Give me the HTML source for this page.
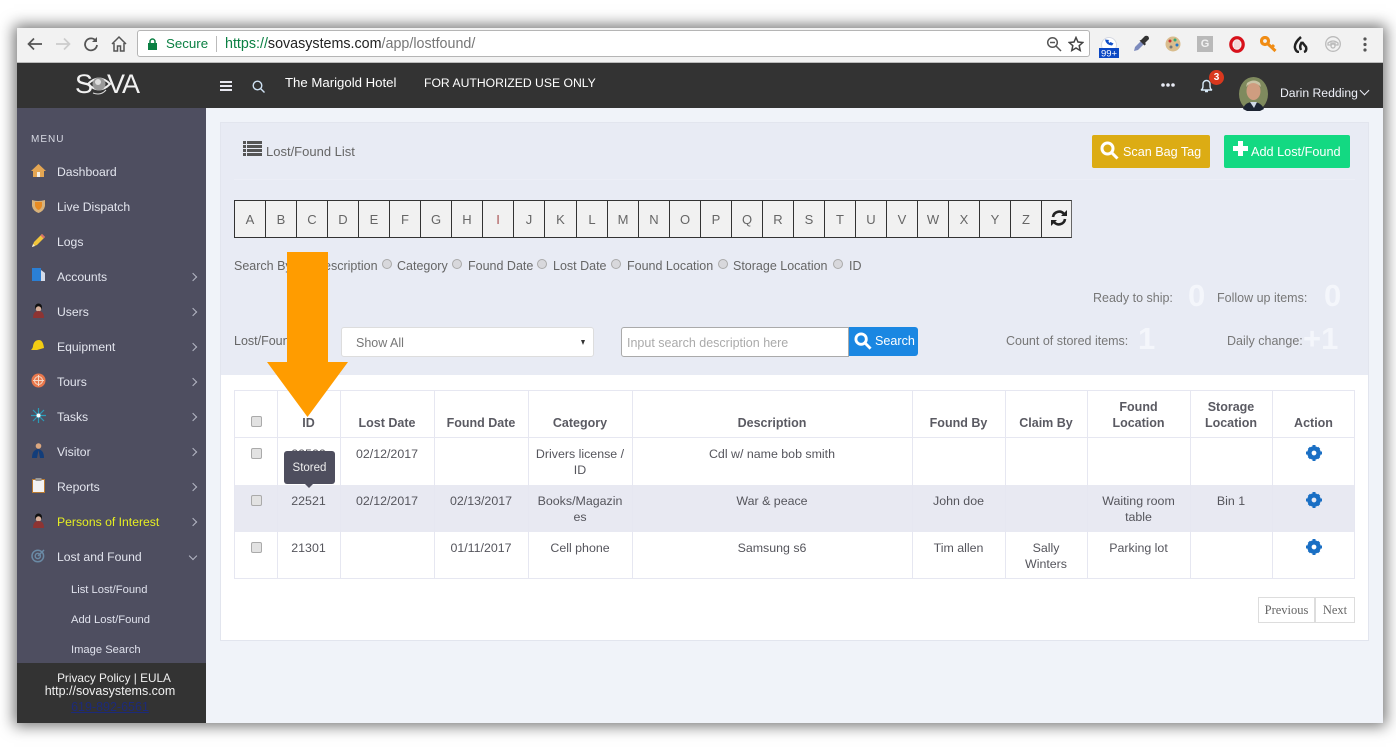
<!DOCTYPE html>
<html><head><meta charset="utf-8"><title>Lost/Found</title>
<style>
html,body{margin:0;padding:0;width:1396px;height:750px;overflow:hidden;background:#fff}
body{font-family:"Liberation Sans",sans-serif;position:relative;font-size:12.5px;color:#555}
.a,.t,.c,svg.i{position:absolute}
.t{white-space:nowrap;line-height:16px}
.c{white-space:nowrap;line-height:16px;text-align:center}
.win{position:absolute;left:17px;top:28px;width:1366px;height:695px;box-shadow:0 0 14px 3px rgba(0,0,0,.55)}
.m{color:#e3e5ee;font-size:12.2px}
.th{font-weight:bold;color:#5a5a62;font-size:12.5px}
.td{color:#55555c;font-size:12.4px}
.l{position:absolute;top:200px;height:36px;width:30px;border:1px solid #333;border-left:0;background:#f1f1f1;text-align:center;line-height:37px;font-size:13px;color:#666}
.v{position:absolute;top:390px;height:189px;width:1px;background:#e6e7f1}
.h{position:absolute;left:234px;width:1121px;height:1px;background:#e6e7f1}
.cb{position:absolute;width:9px;height:9px;border:1px solid #aaa;background:#e2e2e2;border-radius:2px}
.r{position:absolute;width:8px;height:8px;border:1px solid #aaa;background:#d8d8dc;border-radius:50%}
.big{position:absolute;color:#f4f6fb;font-weight:bold;font-size:31px;line-height:32px}
.chev{position:absolute;left:190px;width:5px;height:5px;border-top:1.5px solid #b5b7c4;border-right:1.5px solid #b5b7c4;transform:rotate(45deg)}
</style></head><body>
<div class="win"></div>
<div class="a" style="left:17px;top:28px;width:1366px;height:35px;background:#f2f2f2;border-bottom:1px solid #bbb;box-sizing:border-box"></div>
<div class="a" style="left:137px;top:30px;width:953px;height:27px;background:#fff;border:1px solid #b5b5b5;border-radius:3px;box-sizing:border-box"></div>

<svg class="i" style="left:26px;top:36px" width="18" height="16" viewBox="0 0 18 16" fill="none" stroke="#555" stroke-width="1.700"><path d="M16 8H3M8 2.500L2.500 8l5.500 5.500"/></svg>
<svg class="i" style="left:54px;top:36px" width="18" height="16" viewBox="0 0 18 16" fill="none" stroke="#ccc" stroke-width="1.700"><path d="M2 8h13M10 2.500L15.500 8 10 13.500"/></svg>
<svg class="i" style="left:82px;top:36px" width="18" height="16" viewBox="0 0 18 16" fill="none" stroke="#555" stroke-width="1.800"><path d="M14 5a6 6 0 1 0 1 4"/><path d="M15 1v5h-5" fill="#555" stroke="none"/></svg>
<svg class="i" style="left:110px;top:35px" width="18" height="18" viewBox="0 0 18 18" fill="none" stroke="#555" stroke-width="1.500"><path d="M2 9l7-7 7 7M4 8v8h3.500v-5h3v5H14V8"/></svg>
<svg class="i" style="left:147px;top:38px" width="11" height="12" viewBox="0 0 11 12"><path d="M1 5h9v7H1z" fill="#0b8043"/><path d="M3 5V3.500a2.500 2.500 0 0 1 5 0V5" fill="none" stroke="#0b8043" stroke-width="1.500"/></svg>
<div class="t" style="left:166px;top:36px;color:#0b8043;font-size:13.3px">Secure</div>
<div class="a" style="left:216px;top:36px;width:1px;height:16px;background:#bbb"></div>
<div class="t" style="left:225px;top:36px;font-size:14.3px;color:#777"><span style="color:#0b8043">https://</span><span style="color:#222">sovasystems.com</span>/app/lostfound/</div>
<svg class="i" style="left:1046px;top:36px" width="16" height="16" viewBox="0 0 16 16" fill="none" stroke="#555" stroke-width="1.500"><circle cx="6.500" cy="6.500" r="4.800"/><path d="M10 10l5 5M4 6.500h5"/></svg>
<svg class="i" style="left:1068px;top:36px" width="16" height="16" viewBox="0 0 16 16" fill="none" stroke="#444" stroke-width="1.500"><path d="M8 1.500l2 4.500 4.800.5-3.600 3.200 1 4.800L8 12l-4.200 2.500 1-4.800L1.200 6.500 6 6z"/></svg>

<svg class="i" style="left:1099px;top:36px" width="20" height="22" viewBox="0 0 20 22"><circle cx="10" cy="9" r="7.500" fill="#fff" stroke="#d5d8e2"/><path d="M6 3.500q1 5.500 7 6l1.500-2-3-1.500-1 1-1.200-2 1-1z" fill="#1250c8"/><rect y="12" width="20" height="10" fill="#0c48c4"/><text x="10" y="20.500" font-size="9.500" fill="#fff" text-anchor="middle" font-family="Liberation Sans">99+</text></svg>
<svg class="i" style="left:1133px;top:35px" width="17" height="17" viewBox="0 0 17 17"><path d="M1 16l1-4 7-7 3 3-7 7z" fill="#7d8bbd"/><path d="M8 5l4-4q4-1 4 3l-4 4 1 1-1.500 1.500-5-5z" fill="#333"/></svg>
<svg class="i" style="left:1165px;top:36px" width="16" height="16" viewBox="0 0 16 16"><circle cx="8" cy="8" r="7.500" fill="#d9bd8e"/><circle cx="5" cy="5" r="1.500" fill="#c33"/><circle cx="10" cy="4" r="1.500" fill="#3a7"/><circle cx="12" cy="9" r="1.500" fill="#27c"/><circle cx="6" cy="11" r="1.500" fill="#777"/></svg>
<div class="c" style="left:1197px;top:36px;width:16px;height:16px;background:#b9b9b9;color:#f2f2f2;font-size:11px;font-weight:bold">G</div>
<svg class="i" style="left:1229px;top:36px" width="16" height="17" viewBox="0 0 16 17"><ellipse cx="8" cy="8.500" rx="6.200" ry="6.800" fill="none" stroke="#d8111b" stroke-width="3.200"/><path d="M5 6l2-2 4 1v7l-6 1z" fill="#f4d8d8"/></svg>
<svg class="i" style="left:1260px;top:36px" width="17" height="17" viewBox="0 0 17 17"><circle cx="5" cy="5" r="3.500" fill="none" stroke="#f08c14" stroke-width="3.200"/><path d="M7.500 7.500l8 7.500M12 11l2-2" stroke="#f08c14" stroke-width="3" fill="none"/></svg>
<svg class="i" style="left:1293px;top:36px" width="15" height="17" viewBox="0 0 15 17" fill="none" stroke="#222" stroke-width="2.500"><path d="M8 1Q1 7 2 12q1 4 4 4M9 6q-3 4-1 8M9 6l4 5q1 4-2 5"/></svg>
<svg class="i" style="left:1325px;top:36px" width="16" height="16" viewBox="0 0 16 16" fill="none" stroke="#bbb" stroke-width="1.300"><circle cx="8" cy="8" r="7.300"/><path d="M3 7q5-4 10 0v2h-3V7H6v2H3z"/><circle cx="8" cy="10" r="2"/></svg>
<svg class="i" style="left:1363px;top:37px" width="4" height="15" viewBox="0 0 4 15" fill="#555"><circle cx="2" cy="2" r="1.600"/><circle cx="2" cy="7.500" r="1.600"/><circle cx="2" cy="13" r="1.600"/></svg>

<div class="a" style="left:17px;top:63px;width:1366px;height:45px;background:#333"></div>
<div class="t" style="left:75px;top:69px;font-size:27px;line-height:30px;color:#f2f2f2">S</div>
<div class="t" style="left:107px;top:69px;font-size:27px;line-height:30px;color:#f2f2f2;letter-spacing:-1px">VA</div>
<svg class="i" style="left:87px;top:72px" width="24" height="26" viewBox="0 0 24 26"><path d="M1 12Q12 1 23 12 12 23 1 12z" fill="none" stroke="#eee" stroke-width="2"/><circle cx="12" cy="12" r="6.500" fill="#999"/><circle cx="11" cy="10" r="3" fill="#ddd"/><path d="M6 21q8 3 13-3" fill="none" stroke="#ddd"/></svg>
<svg class="i" style="left:220px;top:81px" width="12" height="10" viewBox="0 0 12 10" fill="#e8e8f0"><rect width="12" height="2"/><rect y="4" width="12" height="2"/><rect y="8" width="12" height="2"/></svg>
<svg class="i" style="left:252px;top:80px" width="14" height="13" viewBox="0 0 14 13" fill="none" stroke="#cfe2f4" stroke-width="1.400"><circle cx="5.500" cy="5.500" r="4.300"/><path d="M8.500 8.500l4 4"/></svg>
<div class="t" style="left:285px;top:75px;color:#fff;font-size:13.2px">The Marigold Hotel</div>
<div class="t" style="left:424px;top:75px;color:#fff;font-size:12.2px">FOR AUTHORIZED USE ONLY</div>
<svg class="i" style="left:1161px;top:83px" width="14" height="4" viewBox="0 0 14 4" fill="#e8eaf4"><circle cx="2" cy="2" r="1.800"/><circle cx="7" cy="2" r="1.800"/><circle cx="12" cy="2" r="1.800"/></svg>
<svg class="i" style="left:1200px;top:79px" width="13" height="14" viewBox="0 0 13 14" fill="none" stroke="#d8eaf8" stroke-width="1.400"><path d="M1 11h11q-2-1-2-4V5a3.500 3.500 0 0 0-7 0v2q0 3-2 4zM5 12.500h3"/></svg>
<div class="c" style="left:1209px;top:70px;width:15px;height:15px;line-height:15px;border-radius:50%;background:#d9381e;color:#fff;font-size:10px;font-weight:bold">3</div>
<div class="t" style="left:1280px;top:85px;color:#eef0f8;font-size:12.2px">Darin Redding</div>
<div class="a" style="left:1361px;top:87px;width:6px;height:6px;border-right:1px solid #eef0f8;border-bottom:1px solid #eef0f8;transform:rotate(45deg)"></div>

<div class="a" style="left:17px;top:108px;width:189px;height:555px;background:#4e4e60"></div>
<div class="a" style="left:17px;top:663px;width:189px;height:60px;background:#333"></div>
<div class="a" style="left:206px;top:108px;width:1177px;height:615px;background:#f0f3f9"></div>
<svg class="i" style="left:1239px;top:77px" width="29" height="34" viewBox="0 0 29 34"><ellipse cx="14.500" cy="17" rx="14.500" ry="17" fill="#7f8a5e"/><ellipse cx="14.500" cy="14" rx="7" ry="9" fill="#cf9d80"/><path d="M7 10q7-8 15 0l-1-4q-6-5-13 0z" fill="#c9c3a5"/><path d="M4 32q2-7 10-7t11 7l-4 2H8z" fill="#1d2433"/><path d="M11 25h7l-3 6z" fill="#cfd8e6"/></svg>

<div class="t" style="left:31px;top:132px;font-size:10px;color:#d8dae4;letter-spacing:1px">MENU</div>
<div class="t m" style="left:57px;top:164px">Dashboard</div>
<div class="t m" style="left:57px;top:199px">Live Dispatch</div>
<div class="t m" style="left:57px;top:234px">Logs</div>
<div class="t m" style="left:57px;top:269px">Accounts</div>
<div class="t m" style="left:57px;top:304px">Users</div>
<div class="t m" style="left:57px;top:339px">Equipment</div>
<div class="t m" style="left:57px;top:374px">Tours</div>
<div class="t m" style="left:57px;top:409px">Tasks</div>
<div class="t m" style="left:57px;top:444px">Visitor</div>
<div class="t m" style="left:57px;top:479px">Reports</div>
<div class="t m" style="left:57px;top:514px;color:#e6ee22">Persons of Interest</div>
<div class="t m" style="left:57px;top:549px">Lost and Found</div>
<div class="t" style="left:71px;top:582px;color:#dfe1ec;font-size:11.2px">List Lost/Found</div>
<div class="t" style="left:71px;top:612px;color:#dfe1ec;font-size:11.2px">Add Lost/Found</div>
<div class="t" style="left:71px;top:642px;color:#dfe1ec;font-size:11.2px">Image Search</div>
<div class="chev" style="top:274px"></div><div class="chev" style="top:309px"></div><div class="chev" style="top:344px"></div><div class="chev" style="top:379px"></div><div class="chev" style="top:414px"></div><div class="chev" style="top:449px"></div><div class="chev" style="top:484px"></div><div class="chev" style="top:519px"></div>
<div class="chev" style="top:553px;transform:rotate(135deg)"></div>

<svg class="i" style="left:31px;top:163px" width="15" height="15" viewBox="0 0 15 15"><path d="M0 8l7.500-7L15 8h-2v6H2V8z" fill="#e4a653"/><path d="M6 14V9h3v5z" fill="#f4eee2"/></svg>
<svg class="i" style="left:31px;top:198px" width="15" height="15" viewBox="0 0 15 15"><path d="M1 2q6 2 13 0v6q-1 5-6.500 7Q2 13 1 8z" fill="#d8b27a"/><path d="M4 4h7v4q-1 3-3.500 4Q5 11 4 8z" fill="#e88b22"/></svg>
<svg class="i" style="left:31px;top:233px" width="15" height="15" viewBox="0 0 15 15"><path d="M1 14l2-5 8-8 3 3-8 8z" fill="#f2c63c"/><path d="M1 14l1-3 2 2z" fill="#f6efe0"/><path d="M11 1l3 3-1.500 1.500-3-3z" fill="#d9706a"/></svg>
<svg class="i" style="left:32px;top:268px" width="13" height="14" viewBox="0 0 13 14"><rect width="9" height="13" fill="#2a7fd5"/><path d="M9 2l4 3v8H9z" fill="#d5dbe8"/></svg>
<svg class="i" style="left:32px;top:303px" width="13" height="16" viewBox="0 0 13 16"><circle cx="6.500" cy="4" r="3.500" fill="#111"/><circle cx="6.500" cy="6" r="2.700" fill="#d8b09a"/><path d="M1 15q0-7 5.500-7T12 15z" fill="#8d3433"/></svg>
<svg class="i" style="left:31px;top:339px" width="14" height="12" viewBox="0 0 14 12"><path d="M0 11q2-2 2-4 1-6 6-6 4 0 5 8l-7 2z" fill="#f3cd12"/></svg>
<svg class="i" style="left:31px;top:373px" width="15" height="15" viewBox="0 0 15 15"><circle cx="7.500" cy="7.500" r="7" fill="#e8774c"/><circle cx="7.500" cy="7.500" r="4" fill="none" stroke="#f4d8c5"/><path d="M7.500 2v11M2 7.500h11" stroke="#f4d8c5"/></svg>
<svg class="i" style="left:31px;top:408px" width="15" height="15" viewBox="0 0 15 15" stroke="#2a9cb8" stroke-width="1.200"><path d="M7.500 0v15M0 7.500h15M2 2l11 11M13 2L2 13"/><circle cx="7.500" cy="7.500" r="2" fill="#fff" stroke="none"/></svg>
<svg class="i" style="left:31px;top:443px" width="14" height="16" viewBox="0 0 14 16"><circle cx="7.500" cy="3" r="2.800" fill="#dca77f"/><path d="M1 15q0-8 6-9 6 1 6 9H9L7.500 7 6 15z" fill="#123d7a"/></svg>
<svg class="i" style="left:32px;top:478px" width="13" height="15" viewBox="0 0 13 15"><rect x=".5" y="1.500" width="12" height="13" fill="#f3f3f3" stroke="#b87a32"/><rect x="3.500" y="0" width="6" height="3" fill="#999"/></svg>
<svg class="i" style="left:32px;top:513px" width="13" height="16" viewBox="0 0 13 16"><circle cx="6.500" cy="4" r="3.500" fill="#111"/><circle cx="6.500" cy="6" r="2.700" fill="#d8b09a"/><path d="M1 15q0-7 5.500-7T12 15z" fill="#8d3433"/></svg>
<svg class="i" style="left:31px;top:548px" width="15" height="15" viewBox="0 0 15 15" fill="none" stroke="#6a8aa5" stroke-width="1.500"><circle cx="6.800" cy="8" r="5.800"/><circle cx="6.800" cy="8" r="2.600"/><path d="M7 8l6-6"/></svg>

<div class="c" style="left:17px;top:670px;width:189px;color:#f0f0f0;font-size:11.8px;padding-left:5px;box-sizing:border-box">Privacy Policy | EULA</div>
<div class="c" style="left:17px;top:683px;width:186px;color:#f0f0f0;font-size:12.5px">http://sovasystems.com</div>
<div class="c" style="left:17px;top:699px;width:186px;color:#1c2a7a;font-size:12.5px;text-decoration:underline">619-892-6561</div>

<div class="a" style="left:220px;top:122px;width:1149px;height:519px;background:#fff;border:1px solid #e2e5ee;box-sizing:border-box"></div>
<div class="a" style="left:221px;top:123px;width:1147px;height:252px;background:#e8ebf4"></div>
<div class="a" style="left:234px;top:179px;width:1121px;height:1px;background:#eceef6"></div>

<svg class="i" style="left:243px;top:141px" width="19" height="15" viewBox="0 0 19 15" fill="#555"><rect width="3" height="3"/><rect x="4" width="15" height="3"/><rect y="4" width="3" height="3"/><rect x="4" y="4" width="15" height="3"/><rect y="8" width="3" height="3"/><rect x="4" y="8" width="15" height="3"/><rect y="12" width="3" height="3"/><rect x="4" y="12" width="15" height="3"/></svg>
<div class="t" style="left:266px;top:144px;color:#666;font-size:13px">Lost/Found List</div>

<div class="a" style="left:1092px;top:135px;width:118px;height:33px;background:#dcac14;border-radius:2px"></div>
<svg class="i" style="left:1100px;top:141px" width="19" height="19" viewBox="0 0 19 19" fill="none" stroke="#fff" stroke-width="3"><circle cx="7.500" cy="7.500" r="5.500"/><path d="M11.500 11.500l6 6"/></svg>
<div class="t" style="left:1123px;top:144px;color:#fff;font-size:12.6px">Scan Bag Tag</div>
<div class="a" style="left:1224px;top:135px;width:126px;height:33px;background:#13d982;border-radius:2px"></div>
<svg class="i" style="left:1233px;top:141px" width="15" height="15" viewBox="0 0 15 15" fill="#fff"><path d="M5 0h5v5h5v5h-5v5H5v-5H0V5h5z"/></svg>
<div class="t" style="left:1251px;top:144px;color:#fff;font-size:12.7px">Add Lost/Found</div>

<div class="a" style="left:234px;top:200px;width:1px;height:38px;background:#333"></div>
<div class="l" style="left:235px">A</div><div class="l" style="left:266px">B</div><div class="l" style="left:297px">C</div><div class="l" style="left:328px">D</div><div class="l" style="left:359px">E</div><div class="l" style="left:390px">F</div><div class="l" style="left:421px">G</div><div class="l" style="left:452px">H</div><div class="l" style="left:483px;color:#a55">I</div><div class="l" style="left:514px">J</div><div class="l" style="left:545px;width:31px">K</div><div class="l" style="left:577px">L</div><div class="l" style="left:608px">M</div><div class="l" style="left:639px">N</div><div class="l" style="left:670px">O</div><div class="l" style="left:701px">P</div><div class="l" style="left:732px">Q</div><div class="l" style="left:763px">R</div><div class="l" style="left:794px">S</div><div class="l" style="left:825px">T</div><div class="l" style="left:856px">U</div><div class="l" style="left:887px">V</div><div class="l" style="left:918px">W</div><div class="l" style="left:949px">X</div><div class="l" style="left:980px">Y</div><div class="l" style="left:1011px">Z</div><div class="l" style="left:1042px;width:29px;border-right:1px solid #666"></div>
<svg class="i" style="left:1050px;top:209px" width="18" height="18" viewBox="0 0 18 18" fill="none" stroke="#222" stroke-width="2.600"><path d="M3 8a6.200 6.200 0 0 1 11-3"/><path d="M15 10a6.200 6.200 0 0 1-11 3"/><path d="M17 1v6h-6z" fill="#222" stroke="none"/><path d="M1 17v-6h6z" fill="#222" stroke="none"/></svg>

<div class="t" style="left:234px;top:258px;color:#666;font-weight:normal;font-size:12.5px">Search By</div>
<div class="t" style="left:315px;top:258px;color:#666">Description</div>
<div class="r" style="left:382px;top:259px"></div><div class="t" style="left:397px;top:258px;color:#666">Category</div>
<div class="r" style="left:452px;top:259px"></div><div class="t" style="left:468px;top:258px;color:#666">Found Date</div>
<div class="r" style="left:537px;top:259px"></div><div class="t" style="left:553px;top:258px;color:#666">Lost Date</div>
<div class="r" style="left:611px;top:259px"></div><div class="t" style="left:627px;top:258px;color:#666">Found Location</div>
<div class="r" style="left:718px;top:259px"></div><div class="t" style="left:733px;top:258px;color:#666">Storage Location</div>
<div class="r" style="left:833px;top:259px"></div><div class="t" style="left:849px;top:258px;color:#666">ID</div>

<div class="t" style="left:1093px;top:290px;color:#777">Ready to ship:</div>
<div class="big" style="left:1188px;top:280px">0</div>
<div class="t" style="left:1217px;top:290px;color:#777">Follow up items:</div>
<div class="big" style="left:1324px;top:280px">0</div>
<div class="t" style="left:1006px;top:333px;color:#777">Count of stored items:</div>
<div class="big" style="left:1138px;top:323px">1</div>
<div class="t" style="left:1227px;top:333px;color:#777">Daily change:</div>
<div class="big" style="left:1305px;top:323px;margin-left:-2px">+1</div>

<div class="t" style="left:234px;top:333px;color:#666">Lost/Found</div>
<div class="a" style="left:341px;top:327px;width:253px;height:30px;background:#fff;border:1px solid #ddd;border-radius:3px;box-sizing:border-box"></div>
<div class="t" style="left:356px;top:335px;color:#777">Show All</div>
<div class="a" style="left:581px;top:340px;width:0;height:0;border-left:2.500px solid transparent;border-right:2.500px solid transparent;border-top:5px solid #333"></div>
<div class="a" style="left:621px;top:327px;width:228px;height:30px;background:#fff;border:1px solid #aaa;border-radius:3px 0 0 3px;box-sizing:border-box"></div>
<div class="t" style="left:627px;top:335px;color:#aaa">Input search description here</div>
<div class="a" style="left:849px;top:327px;width:69px;height:29px;background:#1a87e2;border-radius:0 3px 3px 0"></div>
<svg class="i" style="left:854px;top:332px" width="18" height="18" viewBox="0 0 19 19" fill="none" stroke="#fff" stroke-width="3"><circle cx="7.500" cy="7.500" r="5.500"/><path d="M11.500 11.500l6 6"/></svg>
<div class="t" style="left:875px;top:333px;color:#fff;font-size:12.6px">Search</div>

<div class="a" style="left:234px;top:390px;width:1121px;height:189px;background:#fff;border-radius:3px"></div>
<div class="a" style="left:235px;top:485px;width:1119px;height:47px;background:#e8e9f2"></div>
<div class="h" style="top:390px"></div><div class="h" style="top:437px"></div><div class="h" style="top:578px"></div>
<div class="v" style="left:234px"></div><div class="v" style="left:277px"></div><div class="v" style="left:340px"></div><div class="v" style="left:434px"></div><div class="v" style="left:528px"></div><div class="v" style="left:632px"></div><div class="v" style="left:912px"></div><div class="v" style="left:1005px"></div><div class="v" style="left:1087px"></div><div class="v" style="left:1190px"></div><div class="v" style="left:1272px"></div><div class="v" style="left:1354px"></div>

<div class="cb" style="left:251px;top:416px"></div><div class="cb" style="left:251px;top:448px"></div><div class="cb" style="left:251px;top:495px"></div><div class="cb" style="left:251px;top:542px"></div>

<div class="c th" style="left:277px;width:63px;top:415px">ID</div>
<div class="c th" style="left:340px;width:94px;top:415px">Lost Date</div>
<div class="c th" style="left:434px;width:94px;top:415px">Found Date</div>
<div class="c th" style="left:528px;width:104px;top:415px">Category</div>
<div class="c th" style="left:632px;width:280px;top:415px">Description</div>
<div class="c th" style="left:912px;width:93px;top:415px">Found By</div>
<div class="c th" style="left:1005px;width:82px;top:415px">Claim By</div>
<div class="c th" style="left:1087px;width:103px;top:399px">Found<br>Location</div>
<div class="c th" style="left:1190px;width:82px;top:399px">Storage<br>Location</div>
<div class="c th" style="left:1272px;width:83px;top:415px">Action</div>

<div class="c td" style="left:277px;width:63px;top:446px">22522</div>
<div class="c td" style="left:340px;width:94px;top:446px">02/12/2017</div>
<div class="c td" style="left:528px;width:104px;top:446px">Drivers license /<br>ID</div>
<div class="c td" style="left:632px;width:280px;top:446px">Cdl w/ name bob smith</div>

<div class="c td" style="left:277px;width:63px;top:493px">22521</div>
<div class="c td" style="left:340px;width:94px;top:493px">02/12/2017</div>
<div class="c td" style="left:434px;width:94px;top:493px">02/13/2017</div>
<div class="c td" style="left:528px;width:104px;top:493px">Books/Magazin<br>es</div>
<div class="c td" style="left:632px;width:280px;top:493px">War &amp; peace</div>
<div class="c td" style="left:912px;width:93px;top:493px">John doe</div>
<div class="c td" style="left:1087px;width:103px;top:493px">Waiting room<br>table</div>
<div class="c td" style="left:1190px;width:82px;top:493px">Bin 1</div>

<div class="c td" style="left:277px;width:63px;top:540px">21301</div>
<div class="c td" style="left:434px;width:94px;top:540px">01/11/2017</div>
<div class="c td" style="left:528px;width:104px;top:540px">Cell phone</div>
<div class="c td" style="left:632px;width:280px;top:540px">Samsung s6</div>
<div class="c td" style="left:912px;width:93px;top:540px">Tim allen</div>
<div class="c td" style="left:1005px;width:82px;top:540px">Sally<br>Winters</div>
<div class="c td" style="left:1087px;width:103px;top:540px">Parking lot</div>

<svg class="i" style="left:1306px;top:445px" width="16" height="16" viewBox="0 0 16 16"><circle cx="8" cy="8" r="4.600" fill="none" stroke="#1a6fc4" stroke-width="4.400"/><path d="M6.500 0h3v3h-3zM6.500 13h3v3h-3zM0 6.500h3v3H0zM13 6.500h3v3h-3zM1.800 3.900l2.100-2.100 2 2-2.100 2.100zM10.100 12.200l2.100-2.100 2 2-2.100 2.100zM1.800 12.100l2-2 2.100 2.100-2 2zM10.100 3.800l2.100-2 2 2-2.100 2.100z" fill="#1a6fc4"/></svg>
<svg class="i" style="left:1306px;top:492px" width="16" height="16" viewBox="0 0 16 16"><circle cx="8" cy="8" r="4.600" fill="none" stroke="#1a6fc4" stroke-width="4.400"/><path d="M6.500 0h3v3h-3zM6.500 13h3v3h-3zM0 6.500h3v3H0zM13 6.500h3v3h-3zM1.800 3.900l2.100-2.100 2 2-2.100 2.100zM10.100 12.200l2.100-2.100 2 2-2.100 2.100zM1.800 12.100l2-2 2.100 2.100-2 2zM10.100 3.800l2.100-2 2 2-2.100 2.100z" fill="#1a6fc4"/></svg>
<svg class="i" style="left:1306px;top:539px" width="16" height="16" viewBox="0 0 16 16"><circle cx="8" cy="8" r="4.600" fill="none" stroke="#1a6fc4" stroke-width="4.400"/><path d="M6.500 0h3v3h-3zM6.500 13h3v3h-3zM0 6.500h3v3H0zM13 6.500h3v3h-3zM1.800 3.900l2.100-2.100 2 2-2.100 2.100zM10.100 12.200l2.100-2.100 2 2-2.100 2.100zM1.800 12.100l2-2 2.100 2.100-2 2zM10.100 3.800l2.100-2 2 2-2.100 2.100z" fill="#1a6fc4"/></svg>

<div class="c" style="left:1258px;top:597px;width:57px;height:26px;line-height:25px;box-sizing:border-box;border:1px solid #ddd;background:#fff;font-family:'Liberation Serif',serif;font-size:12.500px;color:#666">Previous</div>
<div class="c" style="left:1315px;top:597px;width:40px;height:26px;line-height:25px;box-sizing:border-box;border:1px solid #ddd;background:#fff;font-family:'Liberation Serif',serif;font-size:12.500px;color:#666">Next</div>

<div class="c" style="left:284px;top:451px;width:51px;height:33px;line-height:35px;background:#4e4e5e;border-radius:3px;color:#eee;font-size:11.500px">Stored</div>
<div class="a" style="left:305px;top:484px;width:0;height:0;border-left:4px solid transparent;border-right:4px solid transparent;border-top:4px solid #4e4e5e"></div>

<svg class="i" style="left:267px;top:252px" width="81" height="165" viewBox="0 0 81 165"><path d="M20 0h41v110h20L40.500 165 0 110h20z" fill="#ff9c00"/></svg>
</body></html>
